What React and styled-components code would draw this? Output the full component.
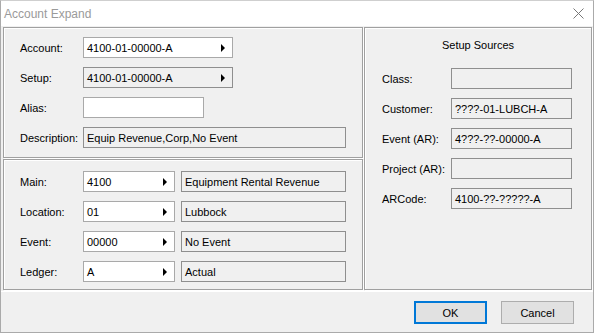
import React from "react";
import styled, { createGlobalStyle } from "styled-components";

const Global = createGlobalStyle`
  html, body { margin: 0; padding: 0; background: #f0f0f0; }
  body { font-family: "Liberation Sans", Arial, sans-serif; font-size: 11px; color: #000; }
  * { box-sizing: border-box; }
`;

const Window = styled.div`
  width: 594px;
  height: 333px;
  display: flex;
  flex-direction: column;
  background: #f0f0f0;
  border: 1px solid #aaaaaa;
  border-top-color: #cfcfcf;
`;

const TitleBar = styled.div`
  height: 25px;
  background: #fff;
  display: flex;
  align-items: center;
  justify-content: space-between;
  padding: 0 9px 0 3px;
  color: #9a9a9a;
  font-size: 12px;
`;

const CloseX = styled.svg`
  width: 11px;
  height: 11px;
`;

const Body = styled.div`
  display: flex;
  gap: 1px;
  padding: 1px 1px 0 2px;
  height: 264px;
`;

const LeftCol = styled.div`
  display: flex;
  flex-direction: column;
  gap: 1px;
  width: 360px;
`;

const Panel = styled.div`
  border: 1px solid #a0a0a0;
  box-shadow: inset 1px 1px 0 #fff, 1px 1px 0 #fff;
  padding: ${(p) => p.$pad || "9px 0 0 16px"};
  height: ${(p) => p.$h || "auto"};
  flex: ${(p) => (p.$grow ? 1 : "none")};
`;

const Grid = styled.div`
  display: grid;
  grid-template-columns: ${(p) => p.$cols};
  grid-auto-rows: 21px;
  row-gap: 9px;
  align-items: center;
`;

const Label = styled.span`
  white-space: nowrap;
`;

const Box = styled.div`
  height: 21px;
  width: ${(p) => p.$w}px;
  border: 1px solid ${(p) => (p.$ro ? "#8f8f8f" : "#a9a9a9")};
  background: ${(p) => (p.$ro ? "#f0f0f0" : "#fff")};
  display: flex;
  align-items: center;
  justify-content: space-between;
  padding: 0 7px 0 3px;
  white-space: nowrap;
  overflow: hidden;
`;

const Arrow = styled.span`
  width: 0;
  height: 0;
  border-top: 4px solid transparent;
  border-bottom: 4px solid transparent;
  border-left: 4px solid #000;
`;

const PanelTitle = styled.div`
  text-align: center;
  height: 16px;
  margin: 0 0 15px -17px;
  line-height: 16px;
`;

const Footer = styled.div`
  flex: 1;
  border-top: 1px solid #ffffff;
  margin-top: 1px;
  display: flex;
  justify-content: flex-end;
  align-items: flex-start;
  gap: 14px;
  padding: 9px 19px 0 0;
`;

const Button = styled.div`
  width: 73px;
  height: 23px;
  background: #e1e1e1;
  border: ${(p) => (p.$default ? "2px solid #0078d7" : "1px solid #adadad")};
  display: flex;
  align-items: center;
  justify-content: center;
`;

const Field = ({ value = "", w, ro, arrow }) => (
  <Box $w={w} $ro={ro}>
    <span>{value}</span>
    {arrow && <Arrow />}
  </Box>
);

const segments = [
  ["Main:", "4100", "Equipment Rental Revenue"],
  ["Location:", "01", "Lubbock"],
  ["Event:", "00000", "No Event"],
  ["Ledger:", "A", "Actual"],
];

const sources = [
  ["Class:", ""],
  ["Customer:", "????-01-LUBCH-A"],
  ["Event (AR):", "4???-??-00000-A"],
  ["Project (AR):", ""],
  ["ARCode:", "4100-??-?????-A"],
];

export default function App() {
  return (
    <>
      <Global />
      <Window>
        <TitleBar>
          <span>Account Expand</span>
          <CloseX viewBox="0 0 11 11">
            <path d="M0.5 0.5 L10.5 10.5 M10.5 0.5 L0.5 10.5" stroke="#777" strokeWidth="1" />
          </CloseX>
        </TitleBar>
        <Body>
          <LeftCol>
            <Panel $h="131px">
              <Grid $cols="63px auto">
                <Label>Account:</Label>
                <Field value="4100-01-00000-A" w={150} arrow />
                <Label>Setup:</Label>
                <Field value="4100-01-00000-A" w={150} arrow ro />
                <Label>Alias:</Label>
                <Field w={121} />
                <Label>Description:</Label>
                <Field value="Equip Revenue,Corp,No Event" w={263} ro />
              </Grid>
            </Panel>
            <Panel $grow $pad="11px 0 0 16px">
              <Grid $cols="63px 98px auto">
                {segments.map(([label, code, desc]) => (
                  <React.Fragment key={label}>
                    <Label>{label}</Label>
                    <Field value={code} w={92} arrow />
                    <Field value={desc} w={165} ro />
                  </React.Fragment>
                ))}
              </Grid>
            </Panel>
          </LeftCol>
          <Panel $grow $pad="9px 0 0 17px">
            <PanelTitle>Setup Sources</PanelTitle>
            <Grid $cols="69px auto">
              {sources.map(([label, value]) => (
                <React.Fragment key={label}>
                  <Label>{label}</Label>
                  <Field value={value} w={121} ro />
                </React.Fragment>
              ))}
            </Grid>
          </Panel>
        </Body>
        <Footer>
          <Button $default>OK</Button>
          <Button>Cancel</Button>
        </Footer>
      </Window>
    </>
  );
}
